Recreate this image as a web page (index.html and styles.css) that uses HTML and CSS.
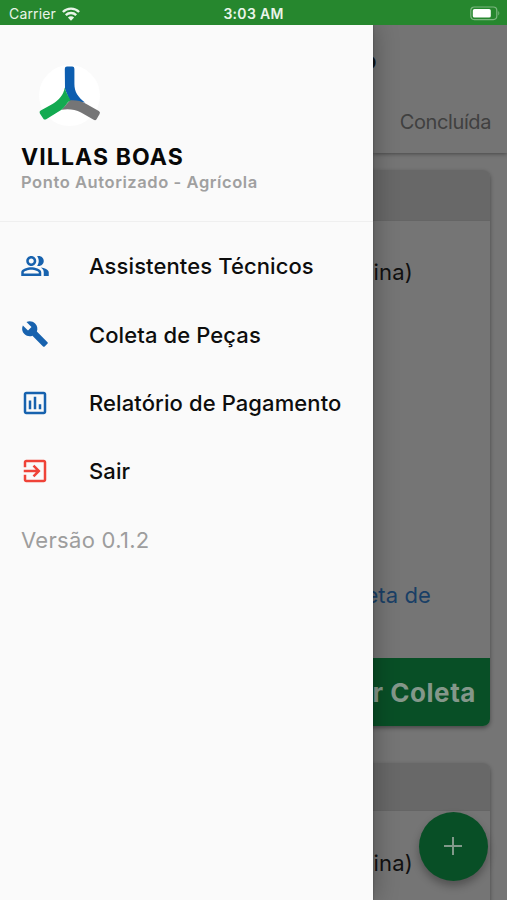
FILE: index.html
```html
<!DOCTYPE html>
<html lang="pt-BR">
<head>
<meta charset="utf-8">
<meta name="viewport" content="width=device-width, initial-scale=1">
<title>Villas Boas</title>
<link rel="stylesheet" href="styles.css">
</head>
<body>
<header class="status">
  <div class="carrier"><span>Carrier</span>
    <svg width="18" height="14" viewBox="0 0 18 14" fill="none" stroke="#e9f4e9" stroke-width="2.4"><path d="M.9 5a11.5 11.5 0 0 1 16.2 0M3.8 8.2a7.4 7.4 0 0 1 10.4 0"/><path d="M9 13.7 5.9 10.5a4.4 4.4 0 0 1 6.2 0z" fill="#e9f4e9" stroke="none"/></svg>
  </div>
  <time>3:03 AM</time>
  <svg class="battery" width="31" height="15" viewBox="0 0 31 15"><rect x=".8" y="1" width="26" height="12.6" rx="3.5" fill="none" stroke="#7db780" stroke-width="1.2"/><rect x="2.8" y="3" width="18" height="8.6" rx="1.7" fill="#fff"/><path d="M28.3 5q2 2.2 0 4.6z" fill="#7db780"/></svg>
</header>
<div class="shell">
  <aside class="drawer">
    <section class="profile">
      <svg class="logo" width="64" height="64" viewBox="0 0 64 64">
        <circle cx="31.500" cy="31.500" r="30.500" fill="#fff"/>
        <path d="M26.800 4.700q0-2.200 2.200-2.200h5.200q2.200 0 2.200 2.200V20C36.400 28 40 33 47 38.500L32 37.500 27 25z" fill="#0d5eb0"/>
        <path d="M32 36.300C38 36 43 36.600 47.500 39.500L60.800 47q1.900 1.100.8 3L58.700 55q-1.100 1.900-3 .8L43 48.500C37 45.200 30 44.500 23.500 45.700z" fill="#757576"/>
        <path d="M26.800 23.500C28 29 30 31 32.500 36.500 29 38 27.500 42.500 23.500 45.800L8.200 55.200q-1.900 1.100-3-.8L1.900 49.500q-1.100-1.900.8-3L14.500 40C21 36 25.500 31 26.800 23.500z" fill="#13aa51"/>
      </svg>
      <h1>VILLAS BOAS</h1>
      <p>Ponto Autorizado - Agrícola</p>
    </section>
    <nav class="menu">
      <a class="item"><svg viewBox="0 0 24 24"><path d="M16.670 13.130C18.040 14.060 19 15.320 19 17v3h4v-3c0-2.180-3.570-3.470-6.330-3.870zM15 12c2.210 0 4-1.790 4-4s-1.790-4-4-4c-.47 0-.91.1-1.330.24C14.500 5.270 15 6.580 15 8s-.5 2.730-1.330 3.760c.42.14.86.24 1.330.24zM9 12c2.210 0 4-1.790 4-4s-1.790-4-4-4-4 1.790-4 4 1.790 4 4 4zm0-6c1.100 0 2 .9 2 2s-.9 2-2 2-2-.9-2-2 .9-2 2-2zM9 13c-2.670 0-8 1.340-8 4v3h16v-3c0-2.660-5.330-4-8-4zm6 5H3v-.99C3.200 16.290 6.300 15 9 15s5.800 1.290 6 2v1z"/></svg><span>Assistentes Técnicos</span></a>
      <a class="item"><svg class="wrench" viewBox="0 0 24 24"><path d="M22.700 19l-9.100-9.100c.9-2.300.4-5-1.500-6.900-2-2-5-2.400-7.400-1.300L9 6 6 9 1.600 4.700C.4 7.100.9 10.100 2.900 12.100c1.900 1.900 4.600 2.400 6.900 1.500l9.100 9.100c.4.4 1 .4 1.400 0l2.300-2.300c.5-.4.5-1.100.1-1.400z"/></svg><span>Coleta de Peças</span></a>
      <a class="item"><svg viewBox="0 0 24 24"><path d="M9 17H7v-7h2v7zm4 0h-2V7h2v10zm4 0h-2v-4h2v4zm2 2H5V5h14v14zm0-16H5c-1.100 0-2 .9-2 2v14c0 1.100.9 2 2 2h14c1.100 0 2-.9 2-2V5c0-1.100-.9-2-2-2z"/></svg><span>Relatório de Pagamento</span></a>
      <a class="item exit"><svg viewBox="0 0 24 24"><path d="M10.090 15.590L11.500 17l5-5-5-5-1.410 1.410L12.670 11H3v2h9.670l-2.580 2.590zM19 3H5c-1.110 0-2 .9-2 2v4h2V5h14v14H5v-4H3v4c0 1.100.89 2 2 2h14c1.100 0 2-.9 2-2V5c0-1.100-.9-2-2-2z"/></svg><span>Sair</span></a>
      <p class="version">Versão 0.1.2</p>
    </nav>
  </aside>
  <main class="page">
    <div class="appbar"><div class="title">o</div><div class="tab">Concluída</div></div>
    <article class="card">
      <div class="card-head"></div>
      <div class="machine">ina)</div>
      <div class="link">eta de</div>
      <div class="action">r Coleta</div>
    </article>
    <article class="card second">
      <div class="card-head"></div>
      <div class="machine">ina)</div>
    </article>
    <button class="fab" aria-label="+"><svg width="18" height="18" viewBox="0 0 18 18"><path d="M9 0v18M0 9h18" stroke="#81998a" stroke-width="2"/></svg></button>
  </main>
</div>
</body>
</html>
```
FILE: styles.css
```css
* { box-sizing: border-box; }
body {
  margin: 0;
  width: 507px;
  height: 900px;
  overflow: hidden;
  font-family: Inter, "Liberation Sans", sans-serif;
  background: #757575;
}
h1, p { margin: 0; }
.status {
  position: relative;
  z-index: 2;
  height: 25px;
  display: grid;
  grid-template-columns: 1fr auto 1fr;
  align-items: center;
  padding: 2px 6px 0 9px;
  background: #26872e;
  color: #e9f4e9;
}
.carrier { display: flex; align-items: center; gap: 6px; font-size: 14px; letter-spacing: .15px; }
.status time { margin-right: 3px; font-size: 14px; font-weight: 600; letter-spacing: .3px; }
.battery { justify-self: end; }
.shell { display: grid; grid-template-columns: 372.5px 1fr; height: 875px; }
.drawer {
  position: relative;
  z-index: 1;
  background: #fafafa;
  box-shadow: 0 0 24px rgba(0, 0, 0, .32), 0 0 2px rgba(0, 0, 0, .3);
}
.profile { height: 197px; padding: 39px 21px 0; border-bottom: 1px solid #efefef; }
.logo { display: block; margin-left: 17px; }
.profile h1 { margin-top: 15px; font-size: 23px; line-height: 28px; font-weight: 650; letter-spacing: 1.1px; color: #080808; white-space: nowrap; }
.profile p { margin-top: 2px; font-size: 16.500px; line-height: 18px; font-weight: 600; letter-spacing: .58px; color: #a0a0a0; white-space: nowrap; }
.menu { padding: 10px 20px; }
.item { display: flex; align-items: center; height: 68.400px; color: #0d0d0d; font-size: 22px; font-weight: 450; letter-spacing: .1px; white-space: nowrap; }
.item svg { width: 30px; height: 30px; margin-right: 39px; fill: #1762ae; }
.item .wrench { width: 28px; height: 28px; margin: 0 40px 2px 1px; }
.item.exit svg { fill: #ef4338; }
.version { padding-left: 1px; line-height: 68px; font-size: 22px; letter-spacing: .3px; color: #9d9d9d; }
.page { position: relative; overflow: hidden; background: #757575; }
.appbar { height: 128px; padding-right: 16px; background: #747474; box-shadow: 0 1px 4px rgba(0, 0, 0, .4); }
.title { height: 73px; line-height: 73px; margin-left: -10px; font-size: 23px; font-weight: 600; color: #111; }
.tab { line-height: 48px; text-align: right; font-size: 20px; letter-spacing: -.4px; color: #404040; }
.card {
  display: flex;
  flex-direction: column;
  height: 556px;
  margin: 17px 17px 0 -16px;
  border-radius: 0 7px 7px 0;
  overflow: hidden;
  background: #757575;
  box-shadow: 0 2px 4px rgba(0, 0, 0, .4);
}
.card-head { height: 51px; flex: none; background: #686868; border-bottom: 1px solid #656565; }
.machine { height: 102px; flex: none; line-height: 102px; text-align: right; padding-right: 77px; font-size: 22px; letter-spacing: .2px; color: #101010; }
.link { margin-top: 222px; height: 102px; line-height: 101px; text-align: right; padding-right: 59px; font-size: 22px; letter-spacing: .1px; color: #193f66; }
.action { margin-top: auto; flex: none; height: 68px; line-height: 69px; text-align: right; padding-right: 14px; font-size: 26px; font-weight: 700; letter-spacing: .55px; color: #84978a; background: #084f26; white-space: nowrap; }
.second { margin-top: 37px; height: 180px; }
.second .card-head { height: 48px; }
.second .machine { line-height: 104px; }
.fab {
  position: absolute;
  right: 19.5px;
  bottom: 19.5px;
  width: 69px;
  height: 69px;
  display: grid;
  place-items: center;
  padding: 0;
  border: 0;
  border-radius: 50%;
  background: #084f26;
  box-shadow: 0 5px 9px rgba(0, 0, 0, .3);
}
```
